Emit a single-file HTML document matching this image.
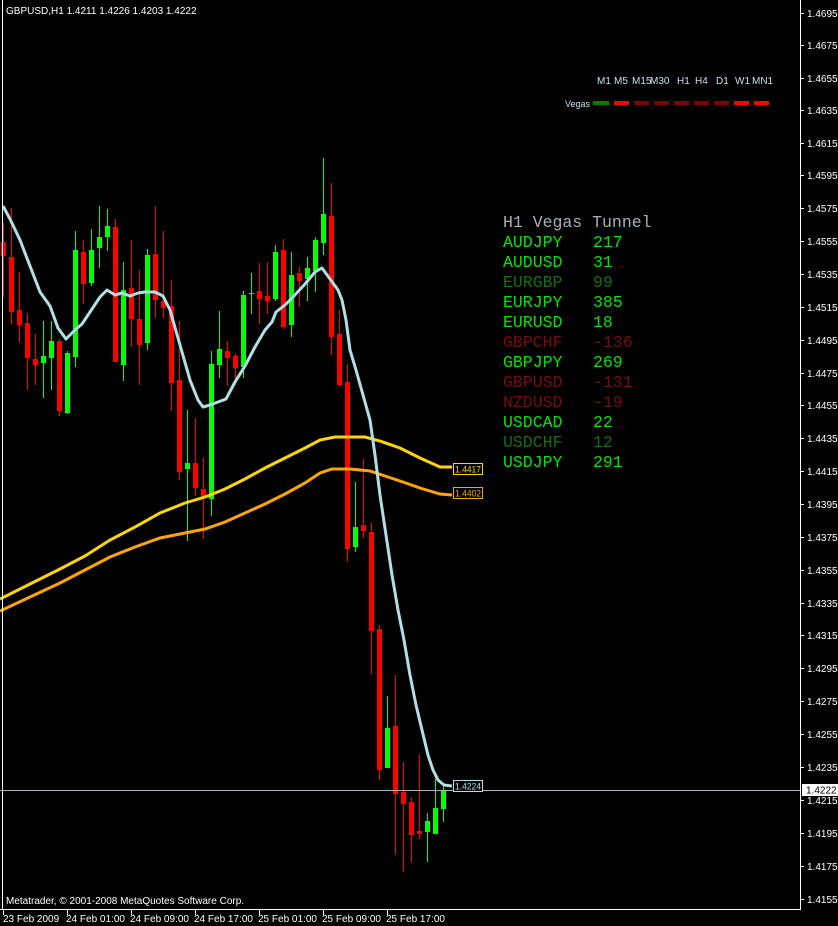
<!DOCTYPE html>
<html><head><meta charset="utf-8"><style>
html,body{margin:0;padding:0;background:#000;}
body{width:838px;height:926px;overflow:hidden;position:relative;}
svg{position:absolute;left:0;top:0;}
.t{font-family:"Liberation Sans",sans-serif;font-size:10px;fill:#fff;}
.m{font-family:"Liberation Mono",monospace;font-size:16.5px;}
.r{fill:#ff0000}.g{fill:#00ff00}
</style></head><body>
<svg width="838" height="926" viewBox="0 0 838 926" xmlns="http://www.w3.org/2000/svg">
<rect width="838" height="926" fill="#000"/>
<g stroke-width="1" shape-rendering="crispEdges">
<path stroke="#ff0000" d="M3.5 223V297M11.5 208V324M19.5 272V343M27.5 313V390M35.5 334V385M59.5 339V416M83.5 240V304M115.5 219V362M131.5 240V347M139.5 270V385M155.5 206V318M163.5 231V318M171.5 280V411M179.5 321V480M195.5 418V496M203.5 458V539M227.5 341V386M235.5 354V385M259.5 263V324M267.5 262V314M283.5 239V329M299.5 267V307M331.5 183V355M339.5 310V385M347.5 364V562M363.5 459V538M371.5 523V674M379.5 625V780M395.5 675V855M403.5 762V872M411.5 797V863M419.5 754V839"/>
<path stroke="#00ff00" d="M43.5 321V398M51.5 321V390M67.5 351V414M75.5 231V367M91.5 229V286M99.5 206V268M107.5 209V251M123.5 262V381M147.5 249V350M187.5 410V541M211.5 351V516M219.5 311V378M243.5 291V378M251.5 273V314M275.5 245V301M291.5 252V337M307.5 257V301M315.5 237V292M323.5 158V255M355.5 482V552M387.5 696V768M427.5 813V862M435.5 779V834M443.5 785V822"/>
</g>
<g shape-rendering="crispEdges">
<rect class="r" x="1" y="242" width="5" height="14"/>
<rect class="r" x="9" y="257" width="5" height="55"/>
<rect class="r" x="17" y="310" width="5" height="15"/>
<rect class="r" x="25" y="323" width="5" height="35"/>
<rect class="r" x="33" y="359" width="5" height="6"/>
<rect class="g" x="41" y="356" width="5" height="7"/>
<rect class="g" x="49" y="341" width="5" height="17"/>
<rect class="r" x="57" y="341" width="5" height="70"/>
<rect class="g" x="65" y="353" width="5" height="60"/>
<rect class="g" x="73" y="250" width="5" height="107"/>
<rect class="r" x="81" y="252" width="5" height="32"/>
<rect class="g" x="89" y="250" width="5" height="33"/>
<rect class="g" x="97" y="237" width="5" height="11"/>
<rect class="g" x="105" y="226" width="5" height="11"/>
<rect class="r" x="113" y="227" width="5" height="135"/>
<rect class="g" x="121" y="290" width="5" height="75"/>
<rect class="r" x="129" y="288" width="5" height="31"/>
<rect class="r" x="137" y="319" width="5" height="26"/>
<rect class="g" x="145" y="255" width="5" height="88"/>
<rect class="r" x="153" y="254" width="5" height="46"/>
<rect class="r" x="161" y="301" width="5" height="7"/>
<rect class="r" x="169" y="306" width="5" height="77"/>
<rect class="r" x="177" y="380" width="5" height="92"/>
<rect class="g" x="185" y="463" width="5" height="6"/>
<rect class="r" x="193" y="463" width="5" height="25"/>
<rect class="r" x="201" y="489" width="5" height="9"/>
<rect class="g" x="209" y="364" width="5" height="135"/>
<rect class="g" x="217" y="349" width="5" height="16"/>
<rect class="r" x="225" y="351" width="5" height="7"/>
<rect class="r" x="233" y="356" width="5" height="12"/>
<rect class="g" x="241" y="295" width="5" height="72"/>
<rect class="g" x="249" y="293" width="5" height="1"/>
<rect class="r" x="257" y="291" width="5" height="8"/>
<rect class="r" x="265" y="296" width="5" height="5"/>
<rect class="g" x="273" y="252" width="5" height="47"/>
<rect class="r" x="281" y="250" width="5" height="77"/>
<rect class="g" x="289" y="275" width="5" height="50"/>
<rect class="r" x="297" y="273" width="5" height="8"/>
<rect class="g" x="305" y="268" width="5" height="11"/>
<rect class="g" x="313" y="240" width="5" height="31"/>
<rect class="g" x="321" y="214" width="5" height="29"/>
<rect class="r" x="329" y="216" width="5" height="121"/>
<rect class="r" x="337" y="334" width="5" height="51"/>
<rect class="r" x="345" y="382" width="5" height="167"/>
<rect class="g" x="353" y="527" width="5" height="20"/>
<rect class="r" x="361" y="525" width="5" height="6"/>
<rect class="r" x="369" y="532" width="5" height="99"/>
<rect class="r" x="377" y="629" width="5" height="141"/>
<rect class="g" x="385" y="728" width="5" height="40"/>
<rect class="r" x="393" y="726" width="5" height="68"/>
<rect class="r" x="401" y="792" width="5" height="12"/>
<rect class="r" x="409" y="802" width="5" height="33"/>
<rect class="r" x="417" y="831" width="5" height="3"/>
<rect class="g" x="425" y="821" width="5" height="11"/>
<rect class="g" x="433" y="808" width="5" height="26"/>
<rect class="g" x="441" y="790" width="5" height="19"/>
</g>
<line x1="0" y1="790.5" x2="801" y2="790.5" stroke="#a8b4c0" stroke-width="1"/>
<polyline fill="none" stroke="#ffa500" stroke-width="3" points="0,611 30,597 60,583 85,570 110,557 135,547 160,538 185,533 205,529 225,522 245,513 265,504 285,494 305,483 320,473 332,469 350,469 370,471 385,476 400,481 420,488 440,494 452,495"/>
<polyline fill="none" stroke="#ffd700" stroke-width="3" points="0,599 30,584 60,569 85,556 110,540 135,527 160,513 185,503 205,497 225,489 245,479 265,468 285,458 305,448 320,440 335,437 350,437 365,437 380,441 400,448 420,458 440,467 452,467"/>
<polyline fill="none" stroke="#b0e0e6" stroke-width="3" stroke-linejoin="round" points="3,206 10,219 20,240 30,266 40,292 50,306 58,328 66,339 75,330 82,324 90,312 100,297 107,290 115,295 122,293 130,296 138,293 145,292 155,292 163,296 170,310 180,345 190,380 198,400 203,407 210,405 218,402 226,399 235,382 245,366 255,347 265,330 272,322 276,312 285,305 293,297 305,284 315,272 322,268 330,279 338,290 342,300 346,320 350,350 356,370 363,395 370,420 375,455 380,495 386,535 392,575 398,610 404,640 410,675 416,705 422,730 428,755 433,770 438,780 444,785 452,786"/>
<rect x="453.5" y="463.5" width="29" height="11" fill="#000" stroke="#ffd700"/>
<text x="455" y="472.5" class="t" style="fill:#ffd700;font-size:9.5px" textLength="26" lengthAdjust="spacingAndGlyphs">1.4417</text>
<rect x="453.5" y="487.5" width="29" height="11" fill="#000" stroke="#ffa500"/>
<text x="455" y="496.5" class="t" style="fill:#ffa500;font-size:9.5px" textLength="26" lengthAdjust="spacingAndGlyphs">1.4402</text>
<rect x="453.5" y="780.5" width="29" height="11" fill="#000" stroke="#b0e0e6"/>
<text x="455" y="789.5" class="t" style="fill:#b0e0e6;font-size:9.5px" textLength="26" lengthAdjust="spacingAndGlyphs">1.4224</text>
<line x1="2.5" y1="0" x2="2.5" y2="910" stroke="#fff"/>
<line x1="0" y1="909.5" x2="801" y2="909.5" stroke="#fff"/>
<line x1="800.5" y1="0" x2="800.5" y2="910" stroke="#fff"/>
<g stroke="#fff">
<path d="M801 13.5h3M801 45.5h3M801 78.5h3M801 110.5h3M801 143.5h3M801 175.5h3M801 208.5h3M801 241.5h3M801 274.5h3M801 307.5h3M801 340.5h3M801 373.5h3M801 405.5h3M801 438.5h3M801 471.5h3M801 504.5h3M801 537.5h3M801 570.5h3M801 603.5h3M801 635.5h3M801 668.5h3M801 701.5h3M801 734.5h3M801 767.5h3M801 800.5h3M801 833.5h3M801 866.5h3M801 899.5h3"/>
</g>
<g class="t">
<text x="807" y="17">1.4695</text><text x="807" y="49">1.4675</text><text x="807" y="82">1.4655</text><text x="807" y="114">1.4635</text>
<text x="807" y="147">1.4615</text><text x="807" y="179">1.4595</text><text x="807" y="212">1.4575</text><text x="807" y="245">1.4555</text>
<text x="807" y="278">1.4535</text><text x="807" y="311">1.4515</text><text x="807" y="344">1.4495</text><text x="807" y="377">1.4475</text>
<text x="807" y="409">1.4455</text><text x="807" y="442">1.4435</text><text x="807" y="475">1.4415</text><text x="807" y="508">1.4395</text>
<text x="807" y="541">1.4375</text><text x="807" y="574">1.4355</text><text x="807" y="607">1.4335</text><text x="807" y="639">1.4315</text>
<text x="807" y="672">1.4295</text><text x="807" y="705">1.4275</text><text x="807" y="738">1.4255</text><text x="807" y="771">1.4235</text>
<text x="807" y="804">1.4215</text><text x="807" y="837">1.4195</text><text x="807" y="870">1.4175</text><text x="807" y="903">1.4155</text>
</g>
<rect x="802" y="784" width="36" height="12" fill="#fff"/>
<text x="806" y="793.5" class="t" style="fill:#000">1.4222</text>
<path stroke="#fff" d="M3.5 910v5M67.5 910v5M131.5 910v5M195.5 910v5M259.5 910v5M323.5 910v5M387.5 910v5"/>
<g class="t">
<text x="3" y="922">23 Feb 2009</text><text x="66" y="922">24 Feb 01:00</text><text x="130" y="922">24 Feb 09:00</text>
<text x="194" y="922">24 Feb 17:00</text><text x="258" y="922">25 Feb 01:00</text><text x="322" y="922">25 Feb 09:00</text>
<text x="386" y="922">25 Feb 17:00</text>
</g>
<text x="6" y="904" class="t">Metatrader, © 2001-2008 MetaQuotes Software Corp.</text>
<text x="6" y="14" class="t">GBPUSD,H1  1.4211 1.4226 1.4203 1.4222</text>
<g class="t" style="fill:#c8e0ec">
<text x="597" y="84">M1</text><text x="614" y="84">M5</text><text x="632" y="84">M15</text><text x="650" y="84">M30</text>
<text x="677" y="84">H1</text><text x="695" y="84">H4</text><text x="716" y="84">D1</text><text x="735" y="84">W1</text><text x="752" y="84">MN1</text>
<text x="565" y="107" style="font-size:9px">Vegas</text>
</g>
<rect x="593" y="101" width="16" height="4" fill="#008000"/>
<rect x="614" y="101" width="15" height="4" fill="#ff0000"/>
<rect x="634" y="101" width="15" height="4" fill="#800000"/>
<rect x="654" y="101" width="15" height="4" fill="#800000"/>
<rect x="674" y="101" width="15" height="4" fill="#800000"/>
<rect x="694" y="101" width="15" height="4" fill="#800000"/>
<rect x="714" y="101" width="15" height="4" fill="#800000"/>
<rect x="734" y="101" width="15" height="4" fill="#ff0000"/>
<rect x="754" y="101" width="15" height="4" fill="#ff0000"/>
<g class="m">
<text x="503" y="227" fill="#a8b0b8">H1 Vegas Tunnel</text>
<text x="503" y="247" fill="#00e600">AUDJPY</text><text x="593" y="247" fill="#00e600">217</text>
<text x="503" y="267" fill="#00e600">AUDUSD</text><text x="593" y="267" fill="#00e600">31</text>
<text x="503" y="287" fill="#137013">EURGBP</text><text x="593" y="287" fill="#137013">99</text>
<text x="503" y="307" fill="#00e600">EURJPY</text><text x="593" y="307" fill="#00e600">385</text>
<text x="503" y="327" fill="#00e600">EURUSD</text><text x="593" y="327" fill="#00e600">18</text>
<text x="503" y="347" fill="#7a0c0c">GBPCHF</text><text x="593" y="347" fill="#7a0c0c">-136</text>
<text x="503" y="367" fill="#00e600">GBPJPY</text><text x="593" y="367" fill="#00e600">269</text>
<text x="503" y="387" fill="#7a0c0c">GBPUSD</text><text x="593" y="387" fill="#7a0c0c">-131</text>
<text x="503" y="407" fill="#7a0c0c">NZDUSD</text><text x="593" y="407" fill="#7a0c0c">-19</text>
<text x="503" y="427" fill="#00e600">USDCAD</text><text x="593" y="427" fill="#00e600">22</text>
<text x="503" y="447" fill="#137013">USDCHF</text><text x="593" y="447" fill="#137013">12</text>
<text x="503" y="467" fill="#00e600">USDJPY</text><text x="593" y="467" fill="#00e600">291</text>
</g>
</svg>
</body></html>
